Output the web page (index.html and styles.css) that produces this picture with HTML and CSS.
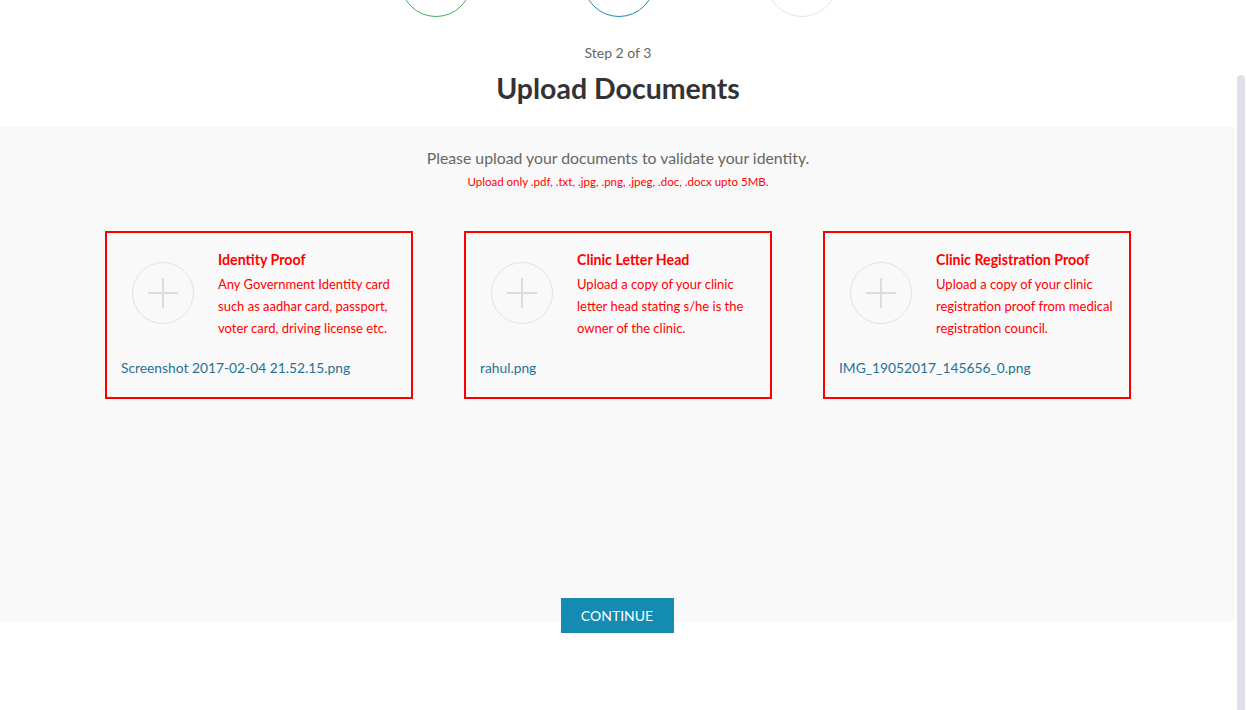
FILE: index.html
```html
<!DOCTYPE html>
<html lang="en">
<head>
<meta charset="utf-8">
<title>Upload Documents</title>
<link rel="stylesheet" href="styles.css">
</head>
<body>
<div class="page">
  <header class="top">
    <div class="stepper">
      <span class="step step-done"></span>
      <span class="step step-current"></span>
      <span class="step step-next"></span>
    </div>
    <p class="step-label">Step 2 of 3</p>
    <h1 class="title">Upload Documents</h1>
  </header>
  <section class="docs">
    <p class="intro">Please upload your documents to validate your identity.</p>
    <p class="note">Upload only .pdf, .txt, .jpg, .png, .jpeg, .doc, .docx upto 5MB.</p>
    <div class="cards">
      <div class="card">
        <div class="card-body">
          <span class="add"><svg viewBox="0 0 62 62" width="62" height="62"><path d="M16 31h30M31 16v30" stroke="#dcdcdc" stroke-width="2" fill="none"/></svg></span>
          <div class="card-text">
            <h2 class="card-title">Identity Proof</h2>
            <p class="card-desc">Any Government Identity card such as aadhar card, passport, voter card, driving license etc.</p>
          </div>
        </div>
        <p class="file">Screenshot 2017-02-04 21.52.15.png</p>
      </div>
      <div class="card">
        <div class="card-body">
          <span class="add"><svg viewBox="0 0 62 62" width="62" height="62"><path d="M16 31h30M31 16v30" stroke="#dcdcdc" stroke-width="2" fill="none"/></svg></span>
          <div class="card-text">
            <h2 class="card-title">Clinic Letter Head</h2>
            <p class="card-desc">Upload a copy of your clinic letter head stating s/he is the owner of the clinic.</p>
          </div>
        </div>
        <p class="file">rahul.png</p>
      </div>
      <div class="card">
        <div class="card-body">
          <span class="add"><svg viewBox="0 0 62 62" width="62" height="62"><path d="M16 31h30M31 16v30" stroke="#dcdcdc" stroke-width="2" fill="none"/></svg></span>
          <div class="card-text">
            <h2 class="card-title">Clinic Registration Proof</h2>
            <p class="card-desc">Upload a copy of your clinic registration proof from medical registration council.</p>
          </div>
        </div>
        <p class="file">IMG_19052017_145656_0.png</p>
      </div>
    </div>
    <div class="actions">
      <button class="continue" type="button">CONTINUE</button>
    </div>
  </section>
</div>
<div class="scroll-thumb"></div>
</body>
</html>
```
FILE: styles.css
```css
html, body {
  margin: 0;
  padding: 0;
  height: 710px;
  overflow: hidden;
  background: #fff;
}
body {
  font-family: Lato, "Open Sans", Arial, sans-serif;
  color: #333;
}
.page {
  width: 1236px;
}
.top {
  display: flow-root;
  height: 127px;
  text-align: center;
}
.stepper {
  display: flex;
  justify-content: center;
  gap: 111px;
  margin-top: -55px;
  padding-left: 2px;
}
.step {
  display: block;
  width: 72px;
  height: 72px;
  box-sizing: border-box;
  border-radius: 50%;
  border: 1.5px solid #e3e3e3;
}
.step-done { border-color: #3fae5c; }
.step-current { border-color: #1a8ab5; }
.step-next { border-color: #e3e3e3; }
.step-label {
  margin: 26px 0 0;
  font-size: 14px;
  line-height: 20px;
  color: #666;
}
.title {
  margin: 8px 0 0;
  font-size: 28.5px;
  line-height: 34px;
  font-weight: 700;
  color: #333;
}
.docs {
  height: 495px;
  background: #f9f9f9;
  text-align: center;
  padding-top: 21px;
  box-sizing: border-box;
}
.intro {
  margin: 0;
  font-size: 15.8px;
  line-height: 20px;
  color: #666;
}
.note {
  margin: 6px 0 0;
  font-size: 11.5px;
  line-height: 16px;
  color: #ff0000;
}
.cards {
  display: flex;
  justify-content: center;
  gap: 51px;
  margin-top: 41px;
}
.card {
  width: 308px;
  height: 168px;
  box-sizing: border-box;
  border: 2px solid #ff0000;
  padding: 17px 0 0 14px;
  text-align: left;
}
.card-body {
  display: flex;
  align-items: flex-start;
}
.add {
  display: block;
  width: 62px;
  height: 62px;
  box-sizing: border-box;
  border: 1px solid #e2e2e2;
  border-radius: 50%;
  margin: 12px 0 0 11px;
  position: relative;
}
.add svg {
  position: absolute;
  left: -1px;
  top: -1px;
}
.card-text {
  width: 182px;
  margin-left: 24px;
}
.card-title {
  margin: 1px 0 0;
  font-size: 14.2px;
  line-height: 18px;
  font-weight: 700;
  color: #ff0000;
}
.card-desc {
  margin: 4px 0 0;
  font-size: 13px;
  line-height: 22px;
  color: #ff0000;
}
.file {
  margin: 20px 0 0;
  font-size: 13.8px;
  line-height: 18px;
  color: #1f7396;
}
.actions {
  display: flex;
  justify-content: center;
  margin-top: 199px;
  padding-right: 2px;
}
.continue {
  width: 113px;
  height: 35px;
  border: 0;
  border-radius: 0;
  background: #138bb3;
  color: #fff;
  font-family: Lato, "Open Sans", Arial, sans-serif;
  font-size: 14px;
  padding: 0;
  cursor: pointer;
}
.scroll-thumb {
  position: fixed;
  right: 1px;
  top: 75px;
  width: 8px;
  height: 645px;
  border-radius: 4px;
  background: #dedfe8;
}
```
